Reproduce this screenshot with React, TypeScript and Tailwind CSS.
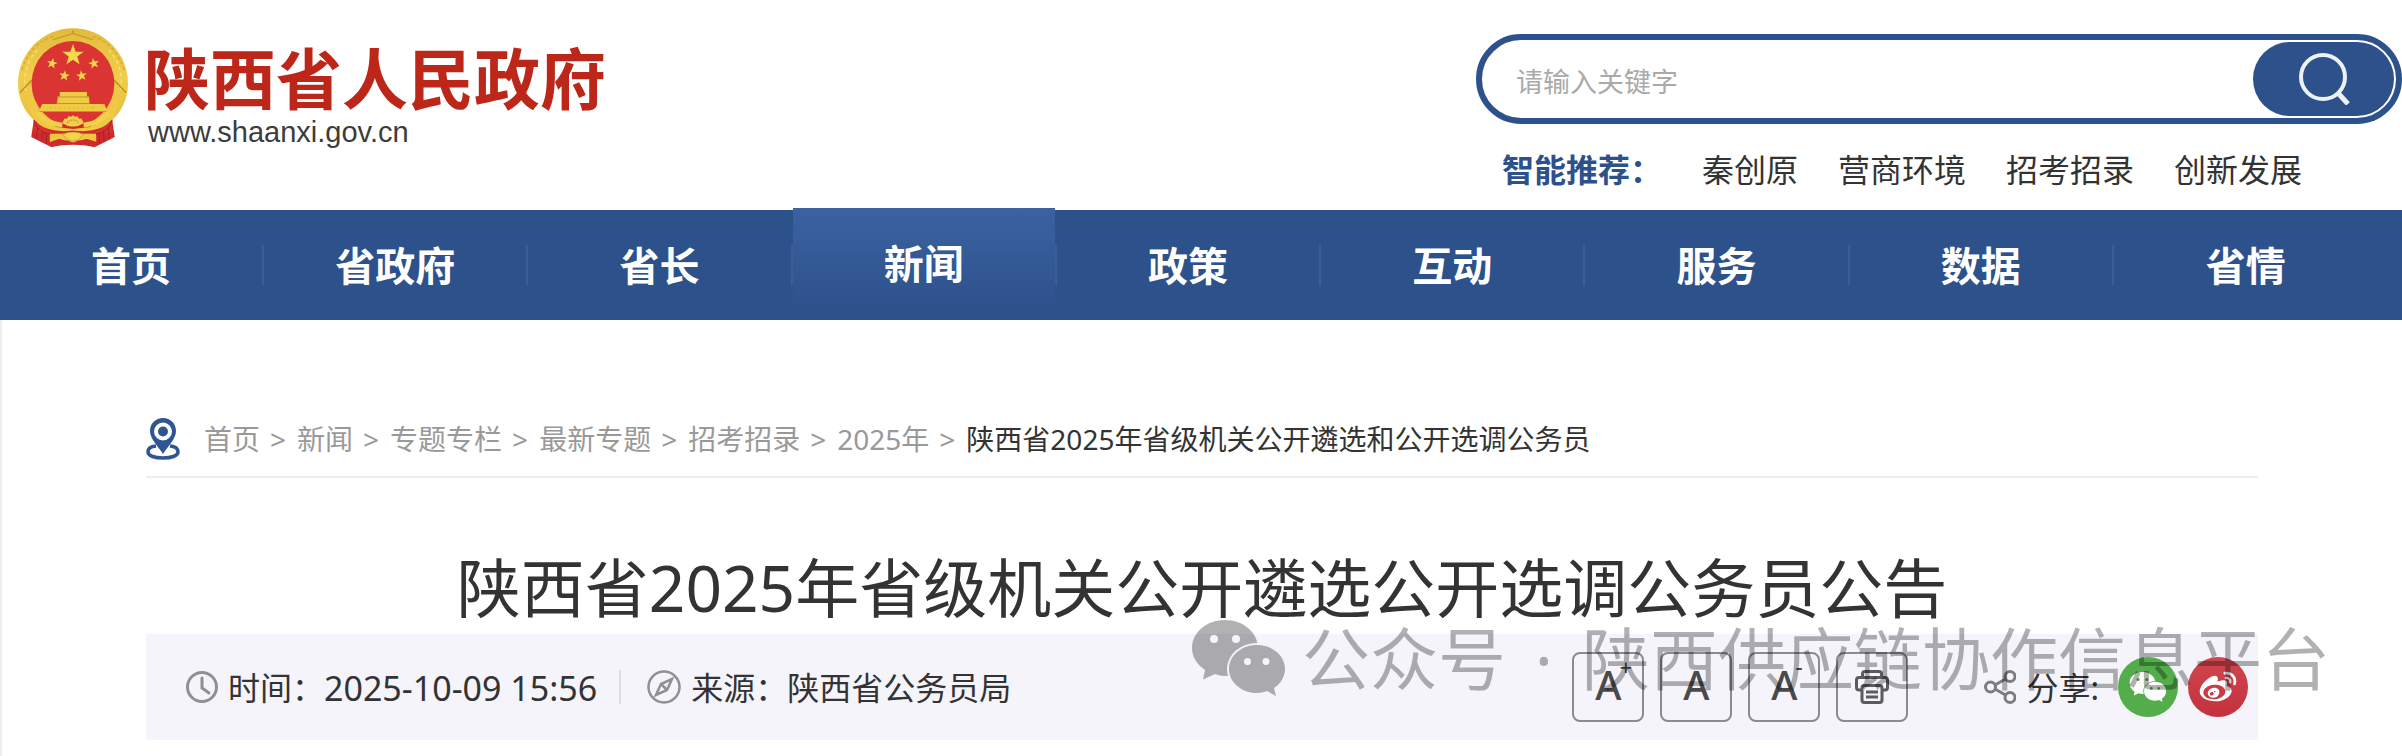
import { useId } from "react";
import { RiWeiboFill } from "react-icons/ri";

const hotWords = ["秦创原", "营商环境", "招考招录", "创新发展"];
const navItems = ["首页", "省政府", "省长", "新闻", "政策", "互动", "服务", "数据", "省情"];
const crumbs = ["首页", "新闻", "专题专栏", "最新专题", "招考招录", "2025年"];

const STAR = "M0-10 2.4-3.1 9.5-3.1 3.8 1.2 5.9 8.1 0 4-5.9 8.1-3.8 1.2-9.5-3.1-2.4-3.1Z";

const Emblem = () => (
  <svg viewBox="24 24 332 360" className="h-[120px] w-[110px] shrink-0" role="img" aria-label="国徽">
    <defs>
      <linearGradient id="ring" x1="0" y1="0" x2="0" y2="1">
        <stop offset="0" stopColor="#e3bb3c" />
        <stop offset="0.5" stopColor="#f0cd4c" />
        <stop offset="1" stopColor="#e9bf3b" />
      </linearGradient>
    </defs>
    <path d="M72 298 64 352 92 366 124 382 190 366 256 382 288 366 316 352 308 298Z" fill="#cf2a2c" />
    <path d="M190 24C100 24 24 98 24 190C24 240 46 280 76 304L304 304C334 280 356 240 356 190C356 98 280 24 190 24Z" fill="url(#ring)" />
    <path d="M72 300 C110 340 150 352 190 352 S270 340 308 300 L308 340 L72 340Z" fill="#d8322f" />
    <path d="M36 150 Q60 70 130 48 M344 150 Q320 70 250 48" stroke="#d2a833" strokeWidth="4" strokeDasharray="10 7" fill="none" />
    <path d="M46 210 Q36 140 82 90 M334 210 Q344 140 298 90" stroke="#f8e07a" strokeWidth="4" strokeDasharray="12 8" fill="none" />
    <path d="M130 58 188 40 190 30 192 40 250 58" stroke="#c99c28" strokeWidth="4" fill="none" />
    <path d="M30 218 66 180 M350 218 314 180" stroke="#b98b25" strokeWidth="4" />
    <ellipse cx="190" cy="190" rx="125" ry="128" fill="#da3532" />
    <path d="M68 228 Q80 290 140 322 L190 328 240 322 Q300 290 312 228 L330 240 Q318 300 280 322 Q240 340 190 332 Q140 340 100 322 Q62 300 50 240Z" fill="#efc945" />
    <path d="M104 278 H276 Q262 300 234 308 L146 308 Q116 300 104 278Z" fill="#da3532" />
    <g fill="#f6d84e">
      <path transform="translate(190 105) scale(3.4)" d={STAR} />
      <path transform="translate(127 130) scale(1.7) rotate(12)" d={STAR} />
      <path transform="translate(253 130) scale(1.7) rotate(-12)" d={STAR} />
      <path transform="translate(164 167) scale(1.7) rotate(8)" d={STAR} />
      <path transform="translate(216 167) scale(1.7) rotate(-8)" d={STAR} />
    </g>
    <path d="M150 216 H232 V230 H150Z M144 230 H238 L240 250 H142Z M97 252 H285 L293 275 H87Z" fill="#f0cb45" />
    <path d="M144 231 H238 M140 251 H240 M88 275 H292" stroke="#c3962a" strokeWidth="3" />
    <path d="M120 264 H260" stroke="#dcb23c" strokeWidth="4" strokeDasharray="5 9" />
    <path d="M84 278 Q104 310 158 316 M296 278 Q276 310 222 316" stroke="#f3d04b" strokeWidth="14" fill="none" />
    <path d="M158 310 L164 296 172 297 176 289 184 291 190 286 196 291 204 289 208 297 216 296 222 310 Q206 322 190 320 Q174 322 158 310Z" fill="#f3d04b" />
    <path d="M172 309 Q190 292 208 309" stroke="#c3962a" strokeWidth="4" fill="none" strokeDasharray="4 3" />
    <path d="M120 342 H260 V366 L232 358 Q212 364 206 362 Q190 374 174 362 Q168 364 148 358 L120 368Z" fill="#efc640" />
    <path d="M120 368 150 358 Q190 378 230 358 L260 368 L256 382 Q190 368 124 382Z" fill="#cf2a2c" />
    <path d="M158 344 Q190 330 222 344 L212 354 Q206 362 190 364 Q174 362 168 354Z" fill="#f5d34c" stroke="#c3962a" strokeWidth="2" />
    <path d="M72 300 Q78 335 120 344 M308 300 Q302 335 260 344 M84 318 80 356 M98 332 96 364 M110 340 110 372 M296 318 300 356 M282 332 284 364 M270 340 270 372" stroke="#a81f25" strokeWidth="3" fill="none" />
  </svg>
);

const WechatLogo = ({ className }: { className?: string }) => {
  const id = useId();
  return (
    <svg viewBox="0 0 94 76" className={className} fill="currentColor" aria-hidden="true">
      <mask id={id}>
        <rect width="94" height="76" fill="#fff" />
        <circle cx="22" cy="19" r="4" fill="#000" />
        <circle cx="44" cy="19" r="4" fill="#000" />
        <ellipse cx="65" cy="49" rx="30" ry="26" fill="#000" />
      </mask>
      <path mask={`url(#${id})`} d="M33 0C14.500 0 0 12.500 0 28C0 37 5 44.500 13 50L11 59.500 23 54C26.300 55 29.600 56 33 56C51.500 56 66 43.500 66 28S51.500 0 33 0Z" />
      <path
        fillRule="evenodd"
        d="M65 25C49.500 25 37 35.500 37 49S49.500 73 65 73C68.500 73 72 72.300 75 71L84 76 82 68C89 63.500 93 56.500 93 49C93 35.500 80.500 25 65 25ZM55.500 38A3.500 3.500 0 1 1 55.500 45A3.500 3.500 0 1 1 55.500 38ZM74 38A3.500 3.500 0 1 1 74 45A3.500 3.500 0 1 1 74 38Z"
      />
    </svg>
  );
};

const Header = () => (
  <header className="flex h-[210px] justify-between">
    <a href="#home" className="flex gap-4 pt-7 pl-[18px]">
      <Emblem />
      <div className="pt-4">
        <h2 className="text-[66px] leading-[68px] font-bold text-[#bd271a]">陕西省人民政府</h2>
        <p className="pt-1 pl-1 font-['Liberation_Sans',sans-serif] text-[29px] leading-8 text-[#3c3c3c]">www.shaanxi.gov.cn</p>
      </div>
    </a>
    <div className="w-[926px] pt-[34px]">
      <form className="flex h-[90px] items-center rounded-full border-6 border-[#2d518b] pr-[2px] pl-[34px]">
        <input
          type="text"
          aria-label="关键字"
          placeholder="请输入关键字"
          className="min-w-0 flex-1 pt-[6px] text-[27px] leading-10 text-[#333] outline-none placeholder:text-[#aaa]"
        />
        <button type="button" aria-label="搜索" className="flex h-[74px] w-[141px] items-center justify-center rounded-full bg-[#2d518b]">
          <svg viewBox="0 0 52 52" className="size-[52px]" fill="none" stroke="#eef1f8" strokeWidth="4">
            <circle cx="25" cy="24" r="22" />
            <path d="M40 40 50 51" strokeWidth="5" />
          </svg>
        </button>
      </form>
      <div className="flex gap-10 pt-[22px] pl-[26px] text-[32px] leading-12 text-[#333]">
        <span className="font-bold text-[#2d518b]">智能推荐：</span>
        {hotWords.map((w) => (
          <a key={w} href="#search">{w}</a>
        ))}
      </div>
    </div>
  </header>
);

const Nav = () => (
  <nav className="bg-[#2d518b]">
    <ul className="flex h-[110px]">
      {navItems.map((item, i) => (
        <li key={item} className="flex w-[11%] items-center">
          <a
            href="#nav"
            className={
              item === "新闻"
                ? "-mt-[2px] flex h-[112px] flex-1 items-center justify-center bg-linear-to-b from-[#3b62a1] to-[#2d518b] to-90% text-[40px] font-bold text-white"
                : "flex h-full flex-1 items-center justify-center pt-[2px] text-[40px] font-bold text-white"
            }
          >
            {item}
          </a>
          {i < navItems.length - 1 && <span className="h-10 w-[2px] bg-[#3d5d93]" />}
        </li>
      ))}
    </ul>
  </nav>
);

const Breadcrumb = () => (
  <div className="flex h-[78px] items-center border-b-2 border-[#eee] pt-[2px] text-[28px] text-[#999]">
    <svg viewBox="0 0 34 42" className="mr-6 h-[42px] w-[34px]" fill="none" stroke="#2f5592" aria-hidden="true">
      <path d="M10 28C4 28.500 2 31 2 34C2 38 9 40 17 40S32 38 32 34C32 31 30 28.500 24 28" strokeWidth="3.500" />
      <path d="M17 0C9.500 0 4 5.500 4 13C4 21 12 28 17 36C22 28 30 21 30 13C30 5.500 24.500 0 17 0Z" fill="#2f5592" stroke="none" />
      <circle cx="17" cy="13.500" r="7" fill="#2f5592" stroke="#fff" strokeWidth="4" />
    </svg>
    {crumbs.map((c) => (
      <span key={c} className="flex">
        <a href="#crumb">{c}</a>
        <span className="mr-[11px] ml-[10px]">&gt;</span>
      </span>
    ))}
    <span className="text-[#333]">陕西省2025年省级机关公开遴选和公开选调公务员</span>
  </div>
);

const toolButton =
  "flex h-[70px] w-[72px] items-center justify-center rounded-lg border-2 border-[#8b8b8f] text-[40px] leading-none font-medium text-[#4a4a4a]";

const Meta = () => (
  <div className="relative flex h-[106px] items-center bg-[#f5f4fb] pr-[10px] pl-10 text-[32px] text-[#333]">
    <svg viewBox="0 0 32 32" className="mr-[10px] size-8" fill="none" stroke="#909090" strokeWidth="3" aria-hidden="true">
      <circle cx="16" cy="16" r="14.500" />
      <path d="M16 7V17L23 22" strokeLinecap="round" />
    </svg>
    <span className="pt-[2px]">时间：</span>
    <span className="pt-[2px] text-[34px]">2025-10-09 15:56</span>
    <span className="mr-[26px] ml-[22px] h-[34px] w-[2px] bg-[#dcdce2]" />
    <svg viewBox="0 0 34 34" className="mr-[10px] size-[34px]" fill="none" stroke="#909090" strokeWidth="2.500" aria-hidden="true">
      <circle cx="17" cy="17" r="15.500" />
      <path d="M25 9 20 20 9 25 14 14ZM14 14 20 20" />
    </svg>
    <span className="pt-[2px]">来源：陕西省公务员局</span>

    <div className="ml-auto flex gap-4">
      <button type="button" aria-label="放大字号" className={toolButton}>
        <span className="relative pb-1">
          A<sup className="absolute -top-[10px] left-full -ml-[2px] text-[22px] leading-none">+</sup>
        </span>
      </button>
      <button type="button" aria-label="默认字号" className={toolButton}>
        <span className="pb-1">A</span>
      </button>
      <button type="button" aria-label="缩小字号" className={toolButton}>
        <span className="relative pb-1">
          A<sup className="absolute -top-[10px] left-full -ml-[2px] text-[22px] leading-none">-</sup>
        </span>
      </button>
      <button type="button" aria-label="打印" className={toolButton}>
        <svg viewBox="0 0 34 34" className="size-[34px]" fill="none" stroke="#5c5c5c" strokeWidth="3" strokeLinejoin="round">
          <path d="M7.500 7V4Q7.500 1.500 10 1.500H24Q26.500 1.500 26.500 4V7" />
          <path d="M7 20H4Q1.500 20 1.500 17.500V10Q1.500 7.500 4 7.500H30Q32.500 7.500 32.500 10V17.500Q32.500 20 30 20H27" />
          <path d="M9.500 15.500H24.500Q27 15.500 27 18V30Q27 32.500 24.500 32.500H9.500Q7 32.500 7 30V18Q7 15.500 9.500 15.500Z" />
          <path d="M11 22H23M11 27H23" />
        </svg>
      </button>
    </div>

    <svg viewBox="0 0 32 34" className="mr-[10px] ml-[76px] h-[34px] w-8" fill="none" stroke="#7d7d7d" strokeWidth="3" aria-hidden="true">
      <circle cx="6.500" cy="17" r="5" />
      <circle cx="26" cy="6.500" r="5" />
      <circle cx="26" cy="27.500" r="5" />
      <path d="M11 15 21.500 9M11 19 21.500 25" />
    </svg>
    <span className="mr-[19px] pt-[2px]">分享:</span>
    <button type="button" aria-label="分享到微信" className="mr-[10px] flex size-[60px] items-center justify-center rounded-full bg-[#52ad4a] text-white">
      <WechatLogo className="h-[30px] w-[38px]" />
    </button>
    <button type="button" aria-label="分享到微博" className="flex size-[60px] items-center justify-center rounded-full bg-linear-to-b from-[#cf4750] to-[#c5303b] text-white">
      <RiWeiboFill className="size-10" />
    </button>

    {/* account stamp floating over the toolbar */}
    <div className="pointer-events-none absolute -top-[14px] -right-[72px] flex h-[76px] items-center text-[68px] leading-[76px] whitespace-nowrap text-black opacity-30">
      <WechatLogo className="mr-4 h-[76px] w-[94px]" />
      <span className="pt-[2px]">公众号</span>
      <span className="w-[76px] pt-[2px] text-center">·</span>
      <span className="pt-[2px]">陕西供应链协作信息平台</span>
    </div>
  </div>
);

const App = () => {
  return (
    <div className="overflow-hidden bg-white font-['Noto_Sans','Noto_Sans_CJK_SC',sans-serif]">
      <Header />
      <Nav />
      <main className="border-l-2 border-[#eee] pt-20 pb-4">
        <article className="mx-auto w-[88%]">
          <Breadcrumb />
          <h1 className="pt-[70px] pb-[6px] text-center text-[64px] leading-20 text-[#333]">
            陕西省2025年省级机关公开遴选公开选调公务员公告
          </h1>
          <Meta />
        </article>
      </main>
    </div>
  );
};

export default App;
